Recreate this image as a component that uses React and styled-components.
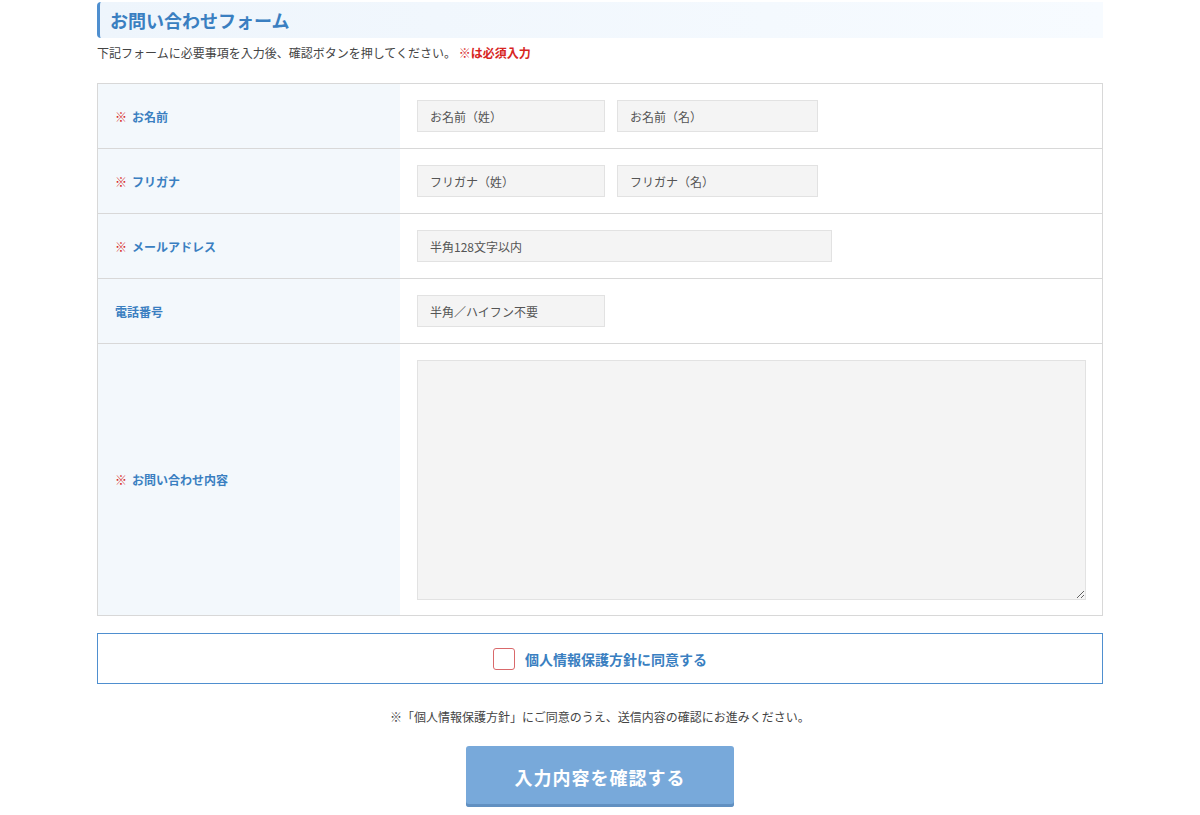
import React from 'react';
import styled, { createGlobalStyle } from 'styled-components';

const GlobalStyle = createGlobalStyle`
    body {
        margin: 0;
        background: #fff;
        font-family: "Noto Sans CJK JP", "Noto Sans", sans-serif;
        color: #333;
    }
`;

const rows = [
    { label: 'お名前', required: true, inputs: [['お名前（姓）', 188], ['お名前（名）', 201]] },
    { label: 'フリガナ', required: true, inputs: [['フリガナ（姓）', 188], ['フリガナ（名）', 201]] },
    { label: 'メールアドレス', required: true, inputs: [['半角128文字以内', 415]] },
    { label: '電話番号', required: false, inputs: [['半角／ハイフン不要', 188]] },
];

const App = () => {
    return (
        <>
            <GlobalStyle />
            <Page>
                <Title>お問い合わせフォーム</Title>
                <Lead>
                    下記フォームに必要事項を入力後、確認ボタンを押してください。 <Red>※は必須入力</Red>
                </Lead>
                <Table>
                    {rows.map((row) => (
                        <Row key={row.label}>
                            <Label>
                                {row.required && <Mark>※</Mark>}
                                {row.label}
                            </Label>
                            <Field>
                                {row.inputs.map(([ph, w]) => (
                                    <Input key={ph} placeholder={ph} $width={w} />
                                ))}
                            </Field>
                        </Row>
                    ))}
                    <Row $last>
                        <Label>
                            <Mark>※</Mark>お問い合わせ内容
                        </Label>
                        <Field $tall>
                            <TextArea />
                        </Field>
                    </Row>
                </Table>
                <Agree>
                    <Check />
                    個人情報保護方針に同意する
                </Agree>
                <Note>※「個人情報保護方針」にご同意のうえ、送信内容の確認にお進みください。</Note>
                <Submit>入力内容を確認する</Submit>
            </Page>
        </>
    );
};

export default App;

const Page = styled.div`
    width: 1006px;
    margin: 0 auto;
    padding-top: 2px;
    display: flex;
    flex-direction: column;
`;

const Title = styled.h2`
    margin: 0;
    height: 36px;
    line-height: 36px;
    padding-left: 10px;
    font-size: 18px;
    font-weight: bold;
    color: #3a7fc1;
    background: linear-gradient(to right, #eef5fc, #f7fbff);
    border-left: 3px solid #4f8fcf;
    border-radius: 4px 0 0 4px;
`;

const Lead = styled.p`
    margin: 6px 0 0;
    font-size: 12px;
    line-height: 18px;
    color: #444;
`;

const Red = styled.span`
    color: #d7261f;
    font-weight: bold;
`;

const Table = styled.div`
    margin-top: 21px;
    border: 1px solid #d8d8d8;
`;

const Row = styled.div`
    display: flex;
    border-bottom: ${(p) => (p.$last ? 'none' : '1px solid #d8d8d8')};
`;

const Label = styled.div`
    width: 302px;
    flex-shrink: 0;
    background: #f3f8fc;
    display: flex;
    align-items: center;
    padding-left: 17px;
    box-sizing: border-box;
    font-size: 12px;
    font-weight: bold;
    color: #3a7fc1;
`;

const Mark = styled.span`
    color: #d7261f;
    margin-right: 5px;
`;

const Field = styled.div`
    flex: 1;
    display: flex;
    gap: 12px;
    padding: ${(p) => (p.$tall ? '16px 16px 15px 17px' : '16px 17px')};
`;

const Input = styled.input`
    width: ${(p) => p.$width}px;
    height: 32px;
    box-sizing: border-box;
    border: 1px solid #e2e2e2;
    background: #f4f4f4;
    padding: 0 12px;
    font-family: inherit;
    font-size: 12px;
    &::placeholder {
        color: #555;
    }
`;

const TextArea = styled.textarea`
    width: 100%;
    height: 240px;
    box-sizing: border-box;
    border: 1px solid #e2e2e2;
    background: #f4f4f4;
`;

const Agree = styled.div`
    margin-top: 17px;
    height: 51px;
    box-sizing: border-box;
    border: 1px solid #4f8fcf;
    display: flex;
    align-items: center;
    justify-content: center;
    gap: 10px;
    font-size: 14px;
    font-weight: bold;
    color: #3a7fc1;
`;

const Check = styled.span`
    width: 20px;
    height: 20px;
    border: 1px solid #d9696b;
    border-radius: 3px;
`;

const Note = styled.p`
    margin: 24px 0 0;
    text-align: center;
    font-size: 12px;
    line-height: 18px;
    color: #444;
`;

const Submit = styled.button`
    margin: 20px auto 0;
    width: 268px;
    height: 61px;
    border: none;
    border-radius: 3px;
    background: #78a9da;
    box-shadow: inset 0 -3px 0 #6190c1;
    color: #fff;
    font-family: inherit;
    font-size: 18px;
    font-weight: bold;
    letter-spacing: 1px;
`;
